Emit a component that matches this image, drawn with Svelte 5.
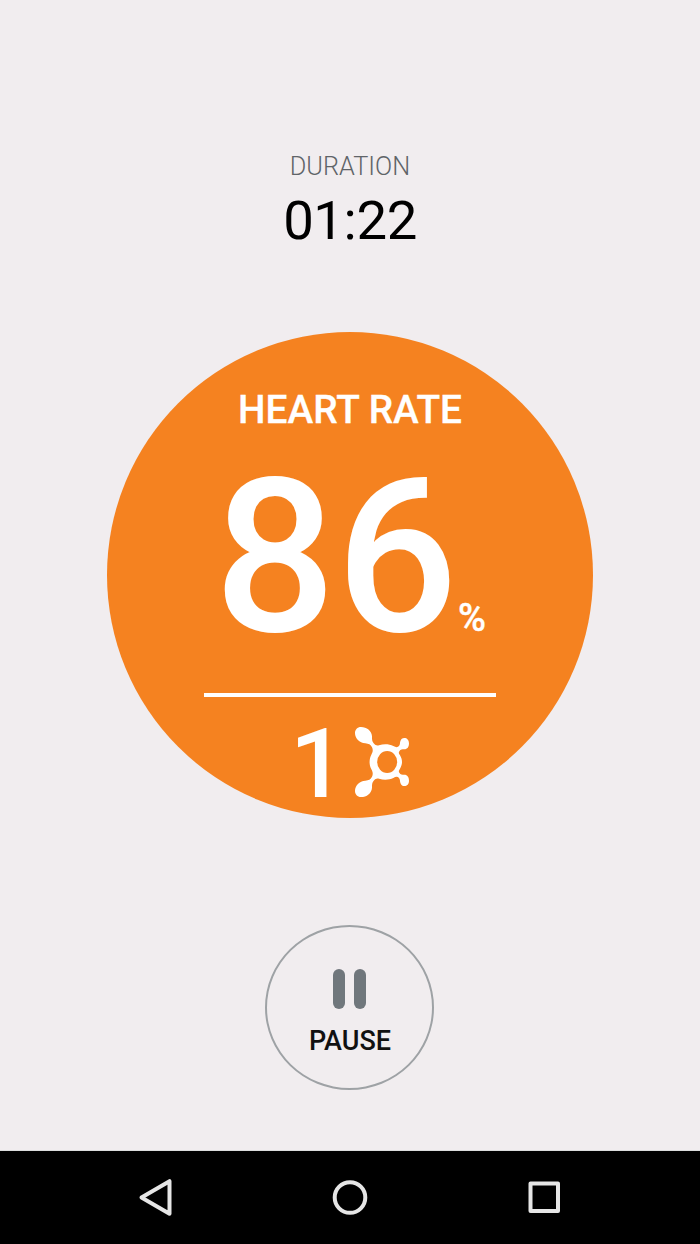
<script>
  const duration = '01:22';
  const rate = 86;
  const points = 1;
</script>

<div class="screen">
  <main>
    <div class="label">DURATION</div>
    <div class="time">{duration}</div>

    <section class="zone">
      <div class="title">HEART RATE</div>
      <div class="rate"><span class="value">{rate}</span><span class="unit">%</span></div>
      <div class="divider"></div>
      <div class="points">
        <span class="count">{points}</span>
        <svg class="splat" width="56" height="72" viewBox="222 138 168 216">
          <path
            fill="#fff"
            fill-rule="evenodd"
            d="M243 141C260 141 275 152 276 169C276 179 276 184 281 190C286 196 291 198 297 196C311 191 328 192 340 198C347 202 353 203 357 198C361 193 359 190 361 184C363 177 367 174 373 174C381 174 387 180 387 190C387 201 382 208 373 208C366 208 362 208 358 214C355 219 357 221 360 226C368 239 368 253 360 266C357 271 355 273 358 278C362 284 366 284 373 284C382 284 387 291 387 302C387 312 381 318 373 318C367 318 363 315 361 308C359 302 361 299 357 294C353 289 347 290 340 294C328 300 311 301 297 296C291 294 286 296 281 302C276 308 276 313 276 323C275 340 260 351 243 351C232 351 225 343 225 333C225 317 238 303 256 302C266 301 272 298 276 290C280 282 278 275 274 268C267 254 267 238 274 224C278 217 280 210 276 202C272 194 266 191 256 190C238 189 225 175 225 159C225 149 232 141 243 141ZM321.500 213A30 33 0 1 0 321.500 279A30 33 0 1 0 321.500 213Z"
          />
        </svg>
      </div>
    </section>

    <button class="pause">
      <span class="bars"><i></i><i></i></span>
      <span class="caption">PAUSE</span>
    </button>
  </main>

  <nav>
    <svg width="700" height="93" viewBox="0 1151 700 93" fill="none" stroke="#e6e6e6" stroke-width="4" stroke-linejoin="round">
      <path d="M141.500 1197.500L169.500 1181.200V1213.800Z" />
      <circle cx="350" cy="1197.500" r="15.300" />
      <rect x="530.500" y="1183.500" width="27.500" height="27.500" />
    </svg>
  </nav>
</div>

<style>
  :global(body) {
    margin: 0;
    background: #f1edef;
  }
  .screen {
    width: 700px;
    height: 1244px;
    display: flex;
    flex-direction: column;
    background: #f1edef;
    font-family: Roboto, sans-serif;
    overflow: hidden;
  }
  main {
    flex: 1;
    box-sizing: border-box;
    padding-top: 152px;
    display: flex;
    flex-direction: column;
    align-items: center;
    border-bottom: 1px solid #dcdddd;
  }
  .label {
    font-size: 25.300px;
    font-weight: 300;
    line-height: 30px;
    color: #5f6468;
  }
  .time {
    margin-top: 8px;
    font-size: 54.500px;
    letter-spacing: -0.400px;
    line-height: 60px;
    color: #000;
  }
  .zone {
    box-sizing: border-box;
    width: 486px;
    height: 486px;
    margin-top: 82px;
    padding-top: 55px;
    border-radius: 50%;
    background: #f58220;
    color: #fff;
    font-weight: 500;
    display: flex;
    flex-direction: column;
    align-items: center;
  }
  .title {
    font-size: 38.800px;
    line-height: 46px;
    -webkit-text-stroke: 0.300px #fff;
  }
  .rate {
    display: flex;
    align-items: baseline;
    height: 200px;
    margin-top: 25px;
  }
  .value {
    font-size: 214.500px;
    line-height: 200px;
  }
  .unit {
    font-size: 38px;
    line-height: 40px;
    -webkit-text-stroke: 0.400px #fff;
  }
  .divider {
    width: 292px;
    height: 4px;
    margin-top: 35px;
    background: #fff;
  }
  .points {
    display: flex;
    align-items: flex-start;
    margin-top: 29px;
    height: 72px;
    gap: 9px;
  }
  .count {
    font-size: 97px;
    line-height: 76px;
  }
  .splat {
    display: block;
  }
  .pause {
    box-sizing: border-box;
    width: 169px;
    height: 165px;
    margin: 107px 1px 0 0;
    padding: 42px 0 0;
    border: 2px solid #9ea2a5;
    border-radius: 50%;
    background: none;
    font-family: inherit;
    display: flex;
    flex-direction: column;
    align-items: center;
  }
  .bars {
    display: flex;
    gap: 9px;
  }
  .bars i {
    width: 12px;
    height: 40px;
    border-radius: 6px;
    background: #70777c;
  }
  .caption {
    margin: 16px 0 0 1px;
    font-size: 27px;
    font-weight: 500;
    line-height: 32px;
    color: #111;
  }
  nav {
    height: 93px;
    background: #000;
  }
  nav svg {
    display: block;
  }
</style>
